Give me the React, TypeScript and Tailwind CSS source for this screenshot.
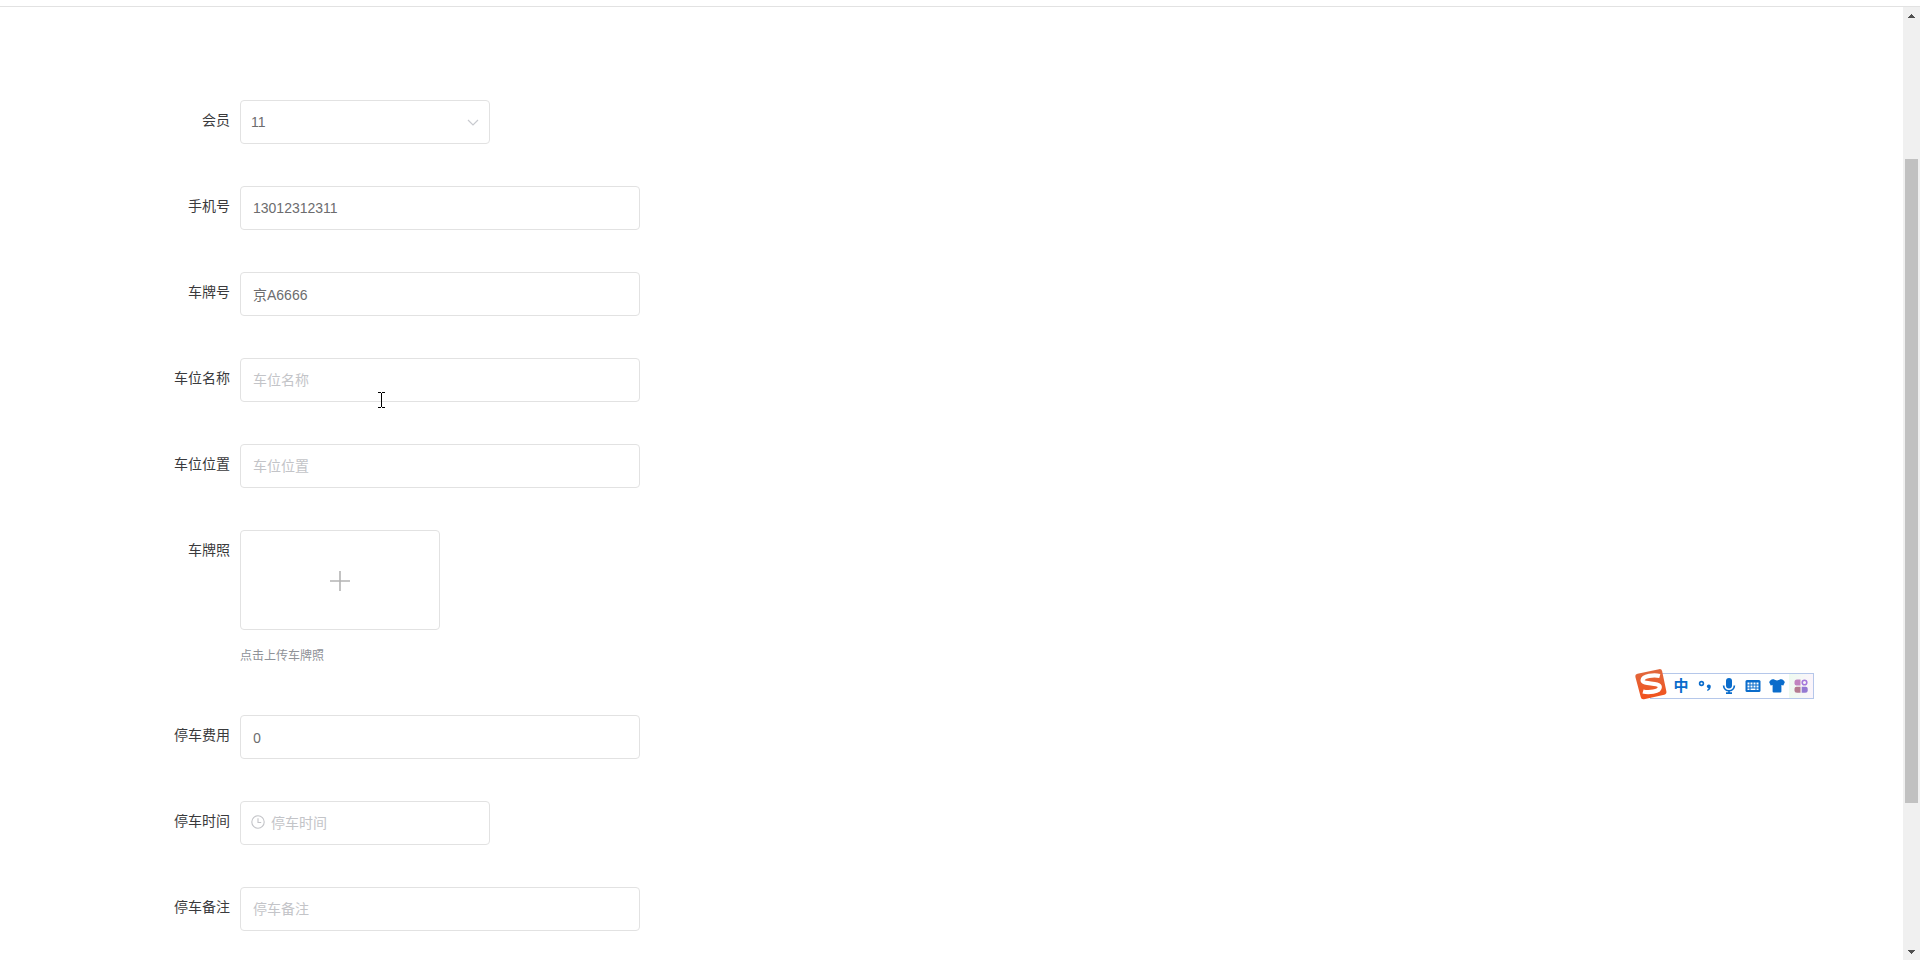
import React, {useState} from 'react';

type Field = {
    name: string,
    label: string,
    kind: 'text' | 'number' | 'select' | 'time' | 'upload',
    placeholder?: string,
};

const fields: Field[] = [
    {name: 'member', label: '会员', kind: 'select'},
    {name: 'phone', label: '手机号', kind: 'text'},
    {name: 'plate', label: '车牌号', kind: 'text'},
    {name: 'spaceName', label: '车位名称', kind: 'text', placeholder: '车位名称'},
    {name: 'spacePlace', label: '车位位置', kind: 'text', placeholder: '车位位置'},
    {name: 'photo', label: '车牌照', kind: 'upload'},
    {name: 'fee', label: '停车费用', kind: 'number'},
    {name: 'time', label: '停车时间', kind: 'time', placeholder: '停车时间'},
    {name: 'remark', label: '停车备注', kind: 'text', placeholder: '停车备注'},
];

const initialValues: Record<string, string> = {
    member: '11',
    phone: '13012312311',
    plate: '京A6666',
    fee: '0',
};

const box = 'h-11 rounded border border-[#e2e2e2] bg-white text-sm text-[#6c6c6e] placeholder:text-[#c3c4c8] placeholder:opacity-100 outline-none';

const ChevronIcon = () => (
    <svg className="pointer-events-none absolute right-[11px] top-4 h-3 w-3" viewBox="0 0 12 12" fill="none"
         stroke="#c8cacf" strokeWidth="1.2">
        <path d="M1 4l5 5 5-5"/>
    </svg>
)

const ClockIcon = () => (
    <svg className="pointer-events-none absolute left-[11px] top-[14px] h-[14px] w-[14px]" viewBox="0 0 14 14"
         fill="none" stroke="#c3c4c8" strokeWidth="1.1">
        <circle cx="7" cy="7" r="6.2"/>
        <path d="M7 3.2V7.5h3.2"/>
    </svg>
)

const FieldControl = ({field, value, onChange}: {field: Field, value: string, onChange: (value: string) => void}) => {
    if (field.kind === 'select') {
        return (
            <div className="relative w-[250px]">
                <select
                    id={field.name}
                    value={value}
                    onChange={(event) => onChange(event.target.value)}
                    className={`${box} w-full appearance-none pl-[10px] pr-8`}
                >
                    <option value="11">11</option>
                </select>
                <ChevronIcon/>
            </div>
        )
    }

    if (field.kind === 'time') {
        return (
            <div className="relative w-[250px]">
                <input
                    id={field.name}
                    type="text"
                    value={value}
                    placeholder={field.placeholder}
                    onChange={(event) => onChange(event.target.value)}
                    className={`${box} w-full pl-[30px] pr-3`}
                />
                <ClockIcon/>
            </div>
        )
    }

    if (field.kind === 'upload') {
        return (
            <div>
                <label
                    htmlFor={field.name}
                    className="flex h-[100px] w-[200px] cursor-pointer items-center justify-center rounded border border-[#e2e2e2]"
                >
                    <svg className="h-[22px] w-5" viewBox="0 0 20 22" stroke="#b4b4b4" strokeWidth="1.6">
                        <path d="M10 2v20M0 12h20"/>
                    </svg>
                    <input id={field.name} type="file" accept="image/*" className="hidden"/>
                </label>
                <p className="mt-[10px] text-xs leading-[33px] text-[#8f9298]">点击上传车牌照</p>
            </div>
        )
    }

    return (
        <input
            id={field.name}
            type="text"
            inputMode={field.kind === 'number' ? 'decimal' : 'text'}
            value={value}
            placeholder={field.placeholder}
            onChange={(event) => onChange(event.target.value)}
            className={`${box} w-[400px] px-3 ${field.kind === 'number' ? "font-['Noto_Sans']" : ''}`}
        />
    )
}

const ScrollBar = () => (
    <div className="flex w-[17px] shrink-0 flex-col items-center bg-[#f0f0f0]">
        <button type="button" aria-label="向上滚动" className="flex h-[17px] w-full items-center justify-center">
            <svg className="h-1 w-[7px]" viewBox="0 0 7 4" fill="#505050" shapeRendering="crispEdges">
                <path d="M3 0h1v1h1v1h1v1h1v1H0V3h1V2h1V1h1z"/>
            </svg>
        </button>
        <div className="grow-[135]"/>
        <div className="w-[13px] grow-[644] bg-[#c1c1c1]"/>
        <div className="grow-[140]"/>
        <button type="button" aria-label="向下滚动" className="flex h-[17px] w-full items-center justify-center">
            <svg className="h-1 w-[7px]" viewBox="0 0 7 4" fill="#505050" shapeRendering="crispEdges">
                <path d="M0 0h7v1H6v1H5v1H4v1H3V3H2V2H1V1H0z"/>
            </svg>
        </button>
    </div>
)

// floating input-method bar
const ImeBar = () => (
    <div className="absolute right-[106px] top-[673px] flex h-[26px] items-center border border-[#b5c7ea] bg-white pl-[18px] text-[#0a6ccb]">
        <svg className="absolute -left-4 -top-[6px] h-8 w-8" viewBox="0 0 32 32">
            <defs>
                <linearGradient id="sogou" x1="0" y1="0" x2="0" y2="1">
                    <stop offset="0" stopColor="#e0693f"/>
                    <stop offset="1" stopColor="#f2521c"/>
                </linearGradient>
            </defs>
            <path d="M2.5 5.8L24 1.200q2.600-.5 3.100 1.800l4.300 20.500q.4 2.600-2.100 3.200L9 31.200q-2.700.5-3.200-2L.4 9Q0 6.400 2.500 5.800z"
                  fill="url(#sogou)"/>
            <path d="M24.800 8C19 6.500 8 7.800 7.600 12.200c-.2 4.700 17 1.800 17.200 6.800.1 5.200-11.800 5.800-16.800 4.500"
                  fill="none" stroke="#fff" strokeWidth="4.200"/>
        </svg>
        <button type="button" className="w-6 text-center text-[15px] font-bold leading-6">中</button>
        <button type="button" aria-label="标点" className="flex w-6 justify-center">
            <svg className="h-4 w-4" viewBox="0 0 16 16" fill="none" stroke="currentColor">
                <circle cx="4.500" cy="5.500" r="1.900" strokeWidth="1.600"/>
                <path d="M9.800 8.200a2 2 0 1 1 4 .6c-.3 2.100-1.400 3.500-3.200 4.200l-.6-1c.9-.5 1.400-1.200 1.600-2-1 0-1.800-.8-1.800-1.800z"
                      fill="currentColor" stroke="none"/>
            </svg>
        </button>
        <button type="button" aria-label="语音" className="flex w-6 justify-center">
            <svg className="h-4 w-4" viewBox="0 0 16 16" fill="none" stroke="currentColor" strokeWidth="1.700">
                <rect x="5" y="0" width="6" height="10.500" rx="3" fill="currentColor" stroke="none"/>
                <path d="M2.600 7.500c.2 7 10.600 7 10.800 0M8 12.500V15M5 15.200h6"/>
            </svg>
        </button>
        <button type="button" aria-label="键盘" className="flex w-6 justify-center">
            <svg className="h-4 w-4" viewBox="0 0 16 16">
                <rect x=".5" y="2" width="15" height="12" rx="1.500" fill="currentColor"/>
                <path d="M2.500 4.500h2v2h-2zM5.500 4.500h2v2h-2zM8.500 4.500h2v2h-2zM11.500 4.500h2v2h-2zM2.500 7.500h2v2h-2zM5.500 7.500h2v2h-2zM8.500 7.500h2v2h-2zM11.500 7.500h2v2h-2zM2.500 10.500h2v1.500h-2zM5.500 10.500h5v1.500h-5zM11.500 10.500h2v1.500h-2z"
                      fill="#fff"/>
            </svg>
        </button>
        <button type="button" aria-label="皮肤" className="flex w-6 justify-center">
            <svg className="h-4 w-4" viewBox="0 0 16 16" fill="currentColor">
                <path d="M5 1.300c1.300 1.500 4.700 1.500 6 0h1.300c1.500.2 2.900 1.300 3.500 3l-1.500 3.200-1.900-.4v6.300q0 1.100-1.100 1.100H4.700q-1.100 0-1.100-1.100V7.100l-1.900.4L.2 4.300c.6-1.700 2-2.800 3.500-3z"/>
            </svg>
        </button>
        <button type="button" aria-label="工具箱"
                className="flex h-6 w-6 items-center justify-center bg-gradient-to-r from-[#eefaf0] to-[#fbf4fb]">
            <svg className="h-[14px] w-[14px]" viewBox="0 0 14 14">
                <path d="M3 .5h3.500V6.500H2.500Q.5 6.500.5 4.500V3Q.5.500 3 .5z" fill="#c183c0"/>
                <circle cx="10.500" cy="3.500" r="2.300" fill="none" stroke="#a678dc" strokeWidth="1.600"/>
                <path d="M2.500 7.700h4v6H3Q.5 13.700.5 11.200V9.700q0-2 2-2z" fill="#b47b91"/>
                <path d="M7.700 7.700h4q2 0 2 2v1.500q0 2.500-2.500 2.500H7.700z" fill="#9479d2"/>
            </svg>
        </button>
    </div>
)

const TextCursor = () => (
    <svg className="pointer-events-none absolute left-[378px] top-[392px] h-4 w-[7px]" viewBox="0 0 7 16" fill="#000"
         shapeRendering="crispEdges">
        <path d="M0 0h3v1h1V0h3v1H4v14h3v1H4v-1H3v1H0v-1h3V1H0z"/>
    </svg>
)

export default () => {
    const [values, setValues] = useState(initialValues);

    return (
        <div className="relative flex h-screen flex-col overflow-hidden bg-white font-['Liberation_Sans','Noto_Sans_CJK_SC',sans-serif]">
            <header className="h-[7px] shrink-0 border-b border-[#e2e2e2]"/>
            <div className="flex min-h-0 grow">
                <main className="grow overflow-hidden pt-[93px]">
                    <form className="flex flex-col gap-[42px]">
                        {fields.map((field) => (
                            <div className="flex items-start gap-[10px]" key={field.name}>
                                <label
                                    htmlFor={field.name}
                                    className="w-[230px] shrink-0 text-right text-sm leading-10 text-[#3a3a3c]"
                                >
                                    {field.label}
                                </label>
                                <FieldControl
                                    field={field}
                                    value={values[field.name] || ''}
                                    onChange={(value) => setValues({...values, [field.name]: value})}
                                />
                            </div>
                        ))}
                    </form>
                </main>
                <ScrollBar/>
            </div>
            <ImeBar/>
            <TextCursor/>
        </div>
    )
}
